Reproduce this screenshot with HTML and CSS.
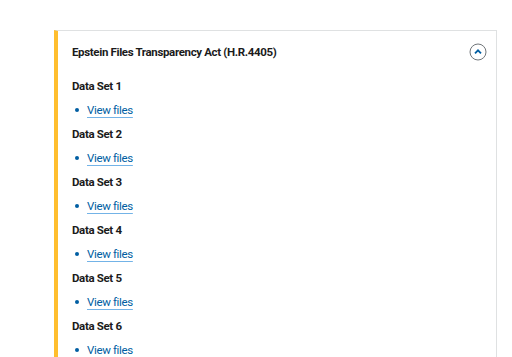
FILE: index.html
```html
<!DOCTYPE html>
<html lang="en">
<head>
<meta charset="utf-8">
<link rel="stylesheet" href="styles.css">
</head>
<body>
<div class="page">
  <div class="accordion">
    <div class="acc-header">
      <h2 class="acc-title">Epstein Files Transparency Act (H.R.4405)</h2>
      <span class="acc-toggle">
        <svg width="18" height="18" viewBox="0 0 18 18" aria-hidden="true">
          <circle cx="9" cy="9" r="8" fill="none" stroke="#71767a" stroke-width="1"/>
          <path d="M6 10.3 L9 7.3 L12 10.3" fill="none" stroke="#005ea2" stroke-width="1.8"/>
        </svg>
      </span>
    </div>
    <div class="acc-body">
      <h3 class="set-title">Data Set 1</h3>
      <ul class="set-list"><li><a href="#">View files</a></li></ul>
      <h3 class="set-title">Data Set 2</h3>
      <ul class="set-list"><li><a href="#">View files</a></li></ul>
      <h3 class="set-title">Data Set 3</h3>
      <ul class="set-list"><li><a href="#">View files</a></li></ul>
      <h3 class="set-title">Data Set 4</h3>
      <ul class="set-list"><li><a href="#">View files</a></li></ul>
      <h3 class="set-title">Data Set 5</h3>
      <ul class="set-list"><li><a href="#">View files</a></li></ul>
      <h3 class="set-title">Data Set 6</h3>
      <ul class="set-list"><li><a href="#">View files</a></li></ul>
    </div>
  </div>
</div>
</body>
</html>
```

FILE: styles.css
```css
html, body {
  margin: 0;
  padding: 0;
  background: #ffffff;
}
body {
  font-family: Roboto, "Liberation Sans", sans-serif;
  color: #1b1b1b;
  letter-spacing: -0.35px;
}
.page {
  padding: 30px 15px 0 54px;
}
.accordion {
  border-left: 4px solid #ffbe2e;
  border-top: 1px solid #dfe1e2;
  border-right: 1px solid #dfe1e2;
}
.acc-header {
  display: flex;
  align-items: center;
  justify-content: space-between;
  height: 41px;
  padding: 0 9px 0 14px;
}
.acc-title {
  margin: 0;
  font-size: 11.5px;
  font-weight: 700;
}
.acc-toggle {
  display: flex;
  width: 18px;
  height: 18px;
}
.acc-body {
  padding: 0 14px 10px 14px;
}
.set-title {
  margin: 0;
  padding-top: 4px;
  height: 20px;
  line-height: 20px;
  font-size: 11.5px;
  font-weight: 700;
}
.set-list {
  list-style: none;
  margin: 0;
  padding: 4px 0 0 15px;
  height: 20px;
  line-height: 20px;
  font-size: 11.5px;
}
.set-list li {
  position: relative;
}
.set-list li::before {
  content: "";
  position: absolute;
  left: -12px;
  top: 8px;
  width: 4px;
  height: 4px;
  border-radius: 50%;
  background: #005ea2;
}
.set-list a {
  color: #005ea2;
  text-decoration: underline;
  text-decoration-color: #73b3e7;
  text-underline-offset: 3px;
}
```
